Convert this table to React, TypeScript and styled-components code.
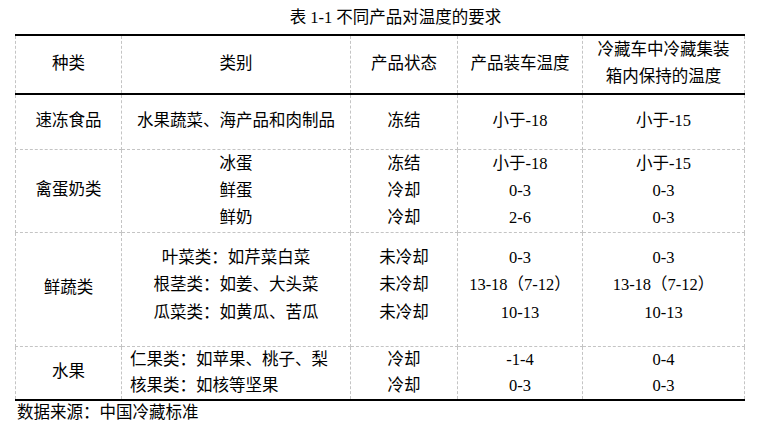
import styled, { createGlobalStyle } from "styled-components"

const GlobalStyle = createGlobalStyle`
  html, body {
    margin: 0;
    padding: 0;
    background: #fff;
  }
  body {
    font-family: "Liberation Serif", "Noto Sans CJK SC", serif;
    font-size: 16.5px;
    color: #000;
  }
`

type Row = {
  kind: string
  items: string[]
  state: string[]
  load: string[]
  store: string[]
  height: number
  padTop: number
  lh: number
  itemAlign?: "center" | "left"
  last?: boolean
}

const rows: Row[] = [
  {
    kind: "速冻食品",
    items: ["水果蔬菜、海产品和肉制品"],
    state: ["冻结"],
    load: ["小于-18"],
    store: ["小于-15"],
    height: 55,
    padTop: 12,
    lh: 27,
  },
  {
    kind: "禽蛋奶类",
    items: ["冰蛋", "鲜蛋", "鲜奶"],
    state: ["冻结", "冷却", "冷却"],
    load: ["小于-18", "0-3", "2-6"],
    store: ["小于-15", "0-3", "0-3"],
    height: 83,
    padTop: 0,
    lh: 27,
  },
  {
    kind: "鲜蔬类",
    items: ["叶菜类：如芹菜白菜", "根茎类：如姜、大头菜", "瓜菜类：如黄瓜、苦瓜"],
    state: ["未冷却", "未冷却", "未冷却"],
    load: ["0-3", "13-18（7-12）", "10-13"],
    store: ["0-3", "13-18（7-12）", "10-13"],
    height: 114,
    padTop: 11,
    lh: 27.5,
  },
  {
    kind: "水果",
    items: ["仁果类：如苹果、桃子、梨", "核果类：如核等坚果"],
    state: ["冷却", "冷却"],
    load: ["-1-4", "0-3"],
    store: ["0-4", "0-3"],
    height: 54,
    padTop: 0,
    lh: 26,
    itemAlign: "left",
    last: true,
  },
]

const App = () => {
  return (
    <Page>
      <GlobalStyle />
      <Caption>表 1-1 不同产品对温度的要求</Caption>
      <Table>
        <colgroup>
          <col style={{ width: 106 }} />
          <col style={{ width: 229 }} />
          <col style={{ width: 107 }} />
          <col style={{ width: 125 }} />
          <col style={{ width: 162 }} />
        </colgroup>
        <thead>
          <HeadRow>
            <HeadCell>种类</HeadCell>
            <HeadCell>类别</HeadCell>
            <HeadCell>产品状态</HeadCell>
            <HeadCell>产品装车温度</HeadCell>
            <HeadCell>
              <Line $lh={27}>冷藏车中冷藏集装</Line>
              <Line $lh={27}>箱内保持的温度</Line>
            </HeadCell>
          </HeadRow>
        </thead>
        <tbody>
          {rows.map((r) => (
            <BodyRow key={r.kind} $h={r.height} $last={r.last}>
              <KindCell>{r.kind}</KindCell>
              <Cell $pt={r.padTop} $align={r.itemAlign}>
                {r.items.map((t) => (
                  <Line key={t} $lh={r.lh}>{t}</Line>
                ))}
              </Cell>
              <Cell $pt={r.padTop}>
                {r.state.map((t, i) => (
                  <Line key={i} $lh={r.lh}>{t}</Line>
                ))}
              </Cell>
              <Cell $pt={r.padTop}>
                {r.load.map((t, i) => (
                  <Line key={i} $lh={r.lh}>{t}</Line>
                ))}
              </Cell>
              <Cell $pt={r.padTop}>
                {r.store.map((t, i) => (
                  <Line key={i} $lh={r.lh}>{t}</Line>
                ))}
              </Cell>
            </BodyRow>
          ))}
        </tbody>
      </Table>
      <Source>数据来源：中国冷藏标准</Source>
    </Page>
  )
}

const Page = styled.div`
  width: 729px;
  padding-left: 15px;
`

const Caption = styled.div`
  height: 34px;
  line-height: 35px;
  text-align: center;
  padding-left: 32px;
  white-space: nowrap;
`

const Table = styled.table`
  width: 729px;
  border-collapse: collapse;
  table-layout: fixed;
  border-left: 1px dashed #c4c4c4;
  border-right: 1px dashed #c4c4c4;
`

const HeadRow = styled.tr`
  height: 59px;
`

const HeadCell = styled.th`
  font-weight: normal;
  text-align: center;
  vertical-align: middle;
  padding: 0 0 3px;
  line-height: 27px;
  border-left: 1px dashed #c4c4c4;
  border-right: 1px dashed #c4c4c4;
  border-top: 2px solid #000;
  border-bottom: 2px solid #000;
`

const BodyRow = styled.tr<{ $h: number; $last?: boolean }>`
  height: ${(p) => p.$h}px;

  td {
    border-bottom: ${(p) => (p.$last ? "2px solid #000" : "1px dashed #c4c4c4")};
  }
`

const Cell = styled.td<{ $pt: number; $align?: "center" | "left" }>`
  text-align: ${(p) => p.$align ?? "center"};
  vertical-align: top;
  padding: ${(p) => p.$pt}px 0 0 ${(p) => (p.$align === "left" ? 8 : 0)}px;
  border-left: 1px dashed #c4c4c4;
  border-right: 1px dashed #c4c4c4;
  white-space: nowrap;
`

const KindCell = styled.td`
  text-align: center;
  vertical-align: middle;
  padding: 0 0 3px;
  line-height: 27px;
  border-left: 1px dashed #c4c4c4;
  border-right: 1px dashed #c4c4c4;
`

const Line = styled.div<{ $lh: number }>`
  line-height: ${(p) => p.$lh}px;
  height: ${(p) => p.$lh}px;
`

const Source = styled.div`
  padding-left: 2px;
  line-height: 24px;
  white-space: nowrap;
`

export default App
